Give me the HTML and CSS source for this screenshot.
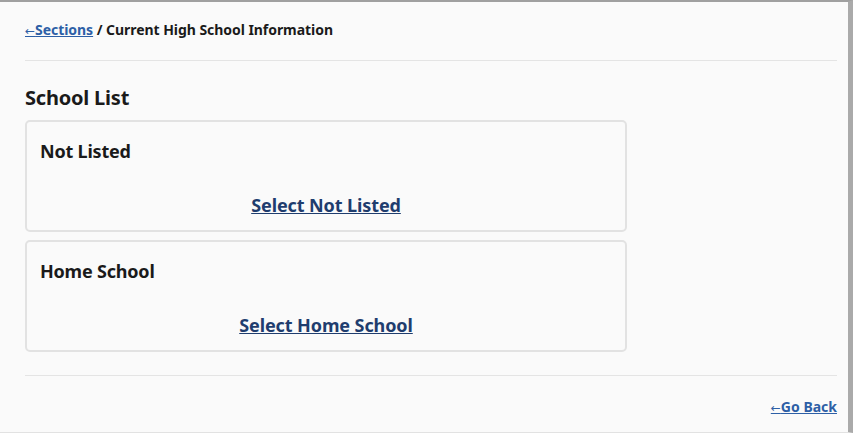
FILE: index.html
```html
<!DOCTYPE html>
<html lang="en">
<head>
<meta charset="utf-8">
<title>Current High School Information</title>
<link rel="stylesheet" href="styles.css">
</head>
<body>
<div class="frame">
  <div class="page">
    <nav class="crumbs"><a href="#" class="crumb-link"><span class="arrow">←</span>Sections</a> / Current High School Information</nav>
    <hr class="rule">
    <h2 class="list-title">School List</h2>
    <div class="cards">
      <section class="card">
        <h3 class="card-title">Not Listed</h3>
        <a href="#" class="card-link">Select Not Listed</a>
      </section>
      <section class="card">
        <h3 class="card-title">Home School</h3>
        <a href="#" class="card-link">Select Home School</a>
      </section>
    </div>
    <hr class="rule rule-bottom">
    <div class="footer"><a href="#" class="back-link"><span class="arrow">←</span>Go Back</a></div>
  </div>
</div>
</body>
</html>
```
FILE: styles.css
```css
html, body {
  margin: 0;
  padding: 0;
  height: 100%;
  background: #fafafa;
}
body {
  font-family: "Noto Sans", "Open Sans", sans-serif;
  color: #1a1a1a;
}
.frame {
  box-sizing: border-box;
  height: 433px;
  border-top: 2px solid #a0a0a0;
  border-right: 5px solid #aaaaaa;
  border-bottom: 1px solid #e2e2e2;
  background: #fafafa;
}
.page {
  padding: 19px 11px 0 25px;
}
.crumbs {
  font-size: 14px;
  font-weight: 700;
  line-height: 18px;
  height: 18px;
  letter-spacing: -0.05px;
}
.crumb-link, .back-link {
  color: #2d5fa6;
  text-decoration: underline;
}
.arrow {
  font-family: "DejaVu Sans", sans-serif;
  font-weight: 400;
  font-size: 12px;
  line-height: 0;
  letter-spacing: 0;
}
.rule {
  border: 0;
  border-top: 1px solid #e4e4e4;
  margin: 21px 0 0;
}
.list-title {
  font-size: 20px;
  font-weight: 700;
  line-height: 24px;
  margin: 25px 0 0;
  letter-spacing: -0.2px;
}
.cards {
  width: 602px;
  margin-top: 10px;
  display: flex;
  flex-direction: column;
  gap: 8px;
}
.card {
  box-sizing: border-box;
  height: 112px;
  flex: none;
  border: 2px solid #e2e2e2;
  border-radius: 5px;
  padding: 18px 13px 0;
  display: flex;
  flex-direction: column;
}
.card-title {
  margin: 0;
  font-size: 18px;
  font-weight: 700;
  line-height: 22px;
  letter-spacing: -0.2px;
}
.card-link {
  margin-top: 32px;
  align-self: center;
  font-size: 18px;
  font-weight: 700;
  line-height: 22px;
  color: #1f3d6e;
  letter-spacing: -0.1px;
}
.rule-bottom {
  margin-top: 23px;
}
.footer {
  display: flex;
  justify-content: flex-end;
  margin-top: 22px;
  font-size: 14px;
  font-weight: 700;
  line-height: 18px;
  height: 18px;
}
```
